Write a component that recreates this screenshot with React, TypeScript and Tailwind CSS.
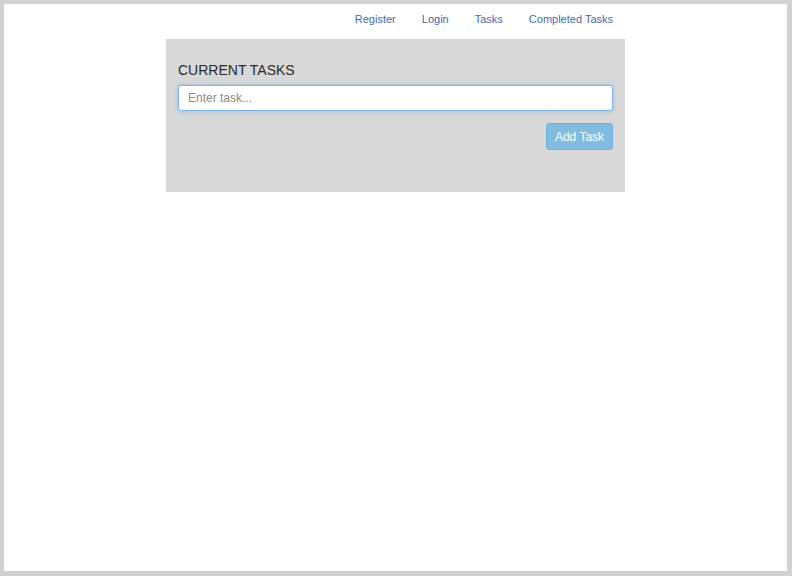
import { useState } from 'react'

const links = ['Register', 'Login', 'Tasks', 'Completed Tasks']

export default function App() {
  const [task, setTask] = useState('')

  return (
    <div className="w-[792px] h-[576px] bg-[#d1d1d1] pl-[4px] pt-[4px] pr-[5px] pb-[5px] font-['Liberation_Sans',Arial,sans-serif]">
      <div className="w-full h-full bg-white">
        {/* Top nav */}
        <div className="mx-auto w-[459px] h-[35px] pt-[7px] px-3 flex justify-end gap-[26px] text-[11px] leading-4">
          {links.map(l => (
            <a key={l} href="#" className="text-[#4569b3] hover:underline">
              {l}
            </a>
          ))}
        </div>

        {/* Task panel */}
        <div className="mx-auto w-[459px] bg-[#d8d8d8] pt-[21px] px-3 pb-[42px]">
          <h2 className="text-[14px] leading-5 text-[#2a2a2a] uppercase">Current Tasks</h2>
          <input
            value={task}
            onChange={e => setTask(e.target.value)}
            placeholder="Enter task..."
            className="mt-[5px] block w-full h-[26px] px-[9px] text-[12px] text-[#555] bg-white border border-[#7eb4ea] rounded-[3px] shadow-[0_0_4px_rgba(102,175,233,0.6)] outline-none placeholder:text-[#8a8a8a]"
          />
          <div className="mt-[12px] flex justify-end">
            <button className="w-[67px] h-[27px] rounded-[3px] bg-[#80bde0] border border-[#74b3d9] text-white text-[12px]">
              Add Task
            </button>
          </div>
        </div>
      </div>
    </div>
  )
}
